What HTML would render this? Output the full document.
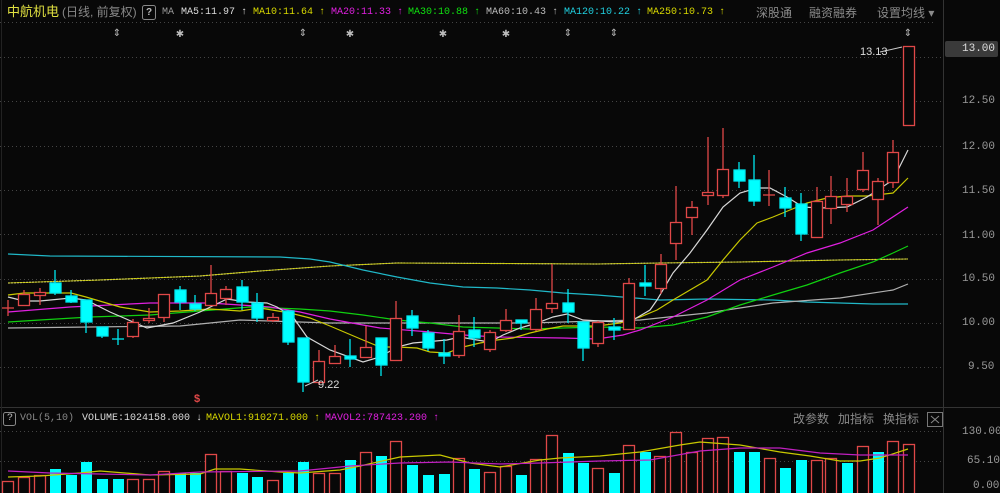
<!DOCTYPE html>
<html><head><meta charset="utf-8"><style>
body{margin:0;background:#080808;width:1000px;height:493px;overflow:hidden;position:relative;font-family:"Liberation Mono","Noto Sans CJK SC",monospace;}
.t{position:absolute;font-size:10px;white-space:nowrap;line-height:12px}
.c{position:absolute;font-family:"Liberation Sans","Noto Sans CJK SC",sans-serif;font-size:12px;white-space:nowrap;line-height:14px;color:#8a8a8a}
.ax{position:absolute;left:962px;font-size:11px;color:#9a9a9a;line-height:12px}
</style></head><body>
<svg width="1000" height="493" style="position:absolute;left:0;top:0">
<g stroke="#444" stroke-dasharray="1,3" stroke-width="1">
<line x1="0" y1="22.5" x2="935" y2="22.5"/>
<line x1="0" y1="57.5" x2="943" y2="57.5"/><line x1="0" y1="101.5" x2="943" y2="101.5"/>
<line x1="0" y1="146.5" x2="943" y2="146.5"/><line x1="0" y1="190.5" x2="943" y2="190.5"/>
<line x1="0" y1="234.5" x2="943" y2="234.5"/><line x1="0" y1="279.5" x2="943" y2="279.5"/>
<line x1="0" y1="323.5" x2="943" y2="323.5"/><line x1="0" y1="367.5" x2="943" y2="367.5"/>
<line x1="0" y1="431.5" x2="943" y2="431.5"/><line x1="0" y1="461.5" x2="943" y2="461.5"/>
</g>
<line x1="0" y1="407.5" x2="1000" y2="407.5" stroke="#333"/>
<line x1="943.5" y1="0" x2="943.5" y2="493" stroke="#333"/>
<line x1="1.5" y1="0" x2="1.5" y2="493" stroke="#222"/>
<g fill="none" stroke-width="1.2">
<polyline stroke="#c8c8c8" stroke-dasharray="2,1" points="8,283 100,280 200,276 260,271 330,266 397,263 597,264 660,263 740,262 840,260 908,259" />
<polyline stroke="#d0d000" stroke-width="0.8" points="8,283 100,280 200,276 260,271 330,266 397,263 597,264 660,263 740,262 840,260 908,259" />
<polyline stroke="#20b8c8" points="8,254 50,256 280,257 310,259 330,262 363,270 397,277 430,283 463,287 497,288 530,290 563,293 597,295 660,300 707,299 773,300 807,302 840,303 873,304 908,304"/>
<polyline stroke="#b0b0b0" points="8,328 90,327 180,326 240,320 330,323 397,323 530,323 597,321 640,320 707,313 773,303 840,298 893,290 908,284"/>
<polyline stroke="#10d010" points="8,322 40,320 90,317 150,315 200,311 250,307 300,309 330,311 363,315 397,320 430,323 463,327 497,328 530,329 563,328 597,327 640,328 673,325 707,317 740,305 773,295 807,285 840,273 873,262 893,253 908,246"/>
<polyline stroke="#e020e0" points="8,312 70,307 150,303 210,303 240,305 270,307 300,312 330,319 363,325 380,328 430,332 463,335 497,337 563,338 597,339 623,335 640,330 673,317 707,300 740,280 773,267 807,253 840,243 873,230 908,207"/>
<polyline stroke="#c8c800" points="8,295 24,293 71,293 86,297 120,307 150,312 180,311 210,309 240,311 260,308 290,313 310,318 330,326 363,340 380,347 397,347 417,348 430,352 447,353 463,347 480,343 497,340 513,338 530,333 547,329 563,326 597,326 620,323 640,317 657,310 673,300 690,290 707,280 723,260 740,240 757,223 773,217 790,210 807,203 827,198 847,196 867,196 893,193 908,178"/>
<polyline stroke="#d8d8d8" points="8,297 24,301 40,301 71,298 86,300 110,312 147,328 173,323 200,312 227,299 247,302 267,303 277,307 293,317 307,337 330,350 363,362 380,357 397,347 413,343 447,340 460,337 477,340 490,342 503,335 520,328 537,323 553,317 567,314 583,320 617,322 633,320 650,310 657,300 673,273 690,253 707,230 723,207 740,193 757,188 770,188 787,197 803,207 820,208 847,207 867,197 893,180 908,150"/>
</g>
<g stroke-width="1.3">
<g stroke="#e04848" fill="#080808">
<line x1="8" y1="300" x2="8" y2="316"/><line x1="2" y1="308" x2="14" y2="308"/>
<line x1="24" y1="290" x2="24" y2="305"/><rect x="18.5" y="294.5" width="11" height="11"/>
<line x1="40" y1="288" x2="40" y2="305"/><rect x="34.5" y="292.5" width="11" height="3"/>
<line x1="133" y1="319" x2="133" y2="338"/><rect x="127.5" y="322.5" width="11" height="14"/>
<line x1="149" y1="308" x2="149" y2="323"/><rect x="143.5" y="318.5" width="11" height="2"/>
<line x1="164" y1="294" x2="164" y2="322"/><rect x="158.5" y="294.5" width="11" height="23"/>
<line x1="211" y1="265" x2="211" y2="305"/><rect x="205.5" y="293.5" width="11" height="12"/>
<line x1="226" y1="286" x2="226" y2="305"/><rect x="220.5" y="289.5" width="11" height="9"/>
<line x1="273" y1="313" x2="273" y2="322"/><rect x="267.5" y="317.5" width="11" height="3"/>
<line x1="319" y1="350" x2="319" y2="385"/><rect x="313.5" y="361.5" width="11" height="21"/>
<line x1="335" y1="345" x2="335" y2="363"/><rect x="329.5" y="356.5" width="11" height="7"/>
<line x1="366" y1="326" x2="366" y2="358"/><rect x="360.5" y="347.5" width="11" height="10"/>
<line x1="396" y1="301" x2="396" y2="361"/><rect x="390.5" y="318.5" width="11" height="42"/>
<line x1="459" y1="315" x2="459" y2="358"/><rect x="453.5" y="331.5" width="11" height="24"/>
<line x1="490" y1="330" x2="490" y2="352"/><rect x="484.5" y="332.5" width="11" height="17"/>
<line x1="506" y1="309" x2="506" y2="332"/><rect x="500.5" y="320.5" width="11" height="10"/>
<line x1="536" y1="298" x2="536" y2="331"/><rect x="530.5" y="309.5" width="11" height="20"/>
<line x1="552" y1="264" x2="552" y2="313"/><rect x="546.5" y="303.5" width="11" height="5"/>
<line x1="598" y1="321" x2="598" y2="347"/><rect x="592.5" y="322.5" width="11" height="21"/>
<line x1="629" y1="278" x2="629" y2="330"/><rect x="623.5" y="283.5" width="11" height="46"/>
<line x1="661" y1="254" x2="661" y2="294"/><rect x="655.5" y="264.5" width="11" height="24"/>
<line x1="676" y1="186" x2="676" y2="260"/><rect x="670.5" y="222.5" width="11" height="21"/>
<line x1="692" y1="201" x2="692" y2="235"/><rect x="686.5" y="207.5" width="11" height="10"/>
<line x1="708" y1="137" x2="708" y2="205"/><rect x="702.5" y="192.5" width="11" height="3"/>
<line x1="723" y1="128" x2="723" y2="198"/><rect x="717.5" y="169.5" width="11" height="26"/>
<line x1="769" y1="170" x2="769" y2="206"/><line x1="763" y1="195" x2="775" y2="195"/>
<line x1="817" y1="187" x2="817" y2="238"/><rect x="811.5" y="201.5" width="11" height="36"/>
<line x1="831" y1="176" x2="831" y2="224"/><rect x="825.5" y="196.5" width="11" height="12"/>
<line x1="847" y1="178" x2="847" y2="212"/><rect x="841.5" y="196.5" width="11" height="8"/>
<line x1="863" y1="152" x2="863" y2="192"/><rect x="857.5" y="170.5" width="11" height="19"/>
<line x1="878" y1="178" x2="878" y2="225"/><rect x="872.5" y="181.5" width="11" height="18"/>
<line x1="893" y1="140" x2="893" y2="188"/><rect x="887.5" y="152.5" width="11" height="30"/>
<rect x="903.5" y="46.5" width="11" height="79"/>
</g>
<g stroke="#00e8f0" fill="#00ffff">
<line x1="55" y1="270" x2="55" y2="295"/><rect x="50" y="283" width="11" height="10"/>
<line x1="71" y1="290" x2="71" y2="303"/><rect x="66" y="296" width="11" height="6"/>
<line x1="86" y1="300" x2="86" y2="333"/><rect x="81" y="300" width="11" height="22"/>
<line x1="102" y1="327" x2="102" y2="338"/><rect x="97" y="327" width="11" height="9"/>
<line x1="118" y1="329" x2="118" y2="345"/><line x1="112" y1="339" x2="124" y2="339"/>
<line x1="180" y1="286" x2="180" y2="310"/><rect x="175" y="290" width="11" height="12"/>
<line x1="195" y1="295" x2="195" y2="311"/><rect x="190" y="304" width="11" height="5"/>
<line x1="242" y1="280" x2="242" y2="310"/><rect x="237" y="287" width="11" height="15"/>
<line x1="257" y1="293" x2="257" y2="322"/><rect x="252" y="303" width="11" height="15"/>
<line x1="288" y1="310" x2="288" y2="345"/><rect x="283" y="311" width="11" height="31"/>
<line x1="303" y1="338" x2="303" y2="392"/><rect x="298" y="338" width="11" height="44"/>
<line x1="350" y1="339" x2="350" y2="367"/><rect x="345" y="356" width="11" height="3"/>
<line x1="381" y1="338" x2="381" y2="376"/><rect x="376" y="338" width="11" height="27"/>
<line x1="412" y1="310" x2="412" y2="336"/><rect x="407" y="316" width="11" height="12"/>
<line x1="428" y1="330" x2="428" y2="351"/><rect x="423" y="333" width="11" height="15"/>
<line x1="444" y1="339" x2="444" y2="364"/><rect x="439" y="353" width="11" height="3"/>
<line x1="474" y1="317" x2="474" y2="347"/><rect x="469" y="330" width="11" height="8"/>
<line x1="521" y1="320" x2="521" y2="330"/><rect x="516" y="320" width="11" height="3"/>
<line x1="568" y1="289" x2="568" y2="323"/><rect x="563" y="303" width="11" height="9"/>
<line x1="583" y1="322" x2="583" y2="361"/><rect x="578" y="322" width="11" height="26"/>
<line x1="614" y1="318" x2="614" y2="340"/><rect x="609" y="327" width="11" height="3"/>
<line x1="645" y1="265" x2="645" y2="296"/><rect x="640" y="283" width="11" height="3"/>
<line x1="739" y1="162" x2="739" y2="188"/><rect x="734" y="170" width="11" height="11"/>
<line x1="754" y1="155" x2="754" y2="206"/><rect x="749" y="180" width="11" height="21"/>
<line x1="785" y1="187" x2="785" y2="217"/><rect x="780" y="198" width="11" height="10"/>
<line x1="801" y1="193" x2="801" y2="241"/><rect x="796" y="204" width="11" height="30"/>
</g>
</g>
<line x1="880" y1="52" x2="902" y2="47" stroke="#ccc"/>
<line x1="305" y1="386" x2="318" y2="380" stroke="#ccc"/>
<g stroke-width="1.3">
<g stroke="#e04848" fill="#080808">
<rect x="2.5" y="481.5" width="11" height="14"/><rect x="18.5" y="477.5" width="11" height="18"/><rect x="34.5" y="475.5" width="11" height="20"/>
<rect x="127.5" y="479.5" width="11" height="16"/><rect x="143.5" y="479.5" width="11" height="16"/><rect x="158.5" y="471.5" width="11" height="24"/>
<rect x="205.5" y="454.5" width="11" height="41"/><rect x="220.5" y="471.5" width="11" height="24"/><rect x="267.5" y="480.5" width="11" height="15"/>
<rect x="313.5" y="473.5" width="11" height="22"/><rect x="329.5" y="473.5" width="11" height="22"/><rect x="360.5" y="452.5" width="11" height="43"/>
<rect x="390.5" y="441.5" width="11" height="54"/><rect x="453.5" y="458.5" width="11" height="37"/><rect x="484.5" y="472.5" width="11" height="23"/>
<rect x="500.5" y="466.5" width="11" height="29"/><rect x="530.5" y="459.5" width="11" height="36"/><rect x="546.5" y="435.5" width="11" height="60"/>
<rect x="592.5" y="468.5" width="11" height="27"/><rect x="623.5" y="445.5" width="11" height="50"/><rect x="654.5" y="456.5" width="11" height="39"/>
<rect x="670.5" y="432.5" width="11" height="63"/><rect x="686.5" y="452.5" width="11" height="43"/><rect x="702.5" y="438.5" width="11" height="57"/>
<rect x="717.5" y="437.5" width="11" height="58"/><rect x="764.5" y="458.5" width="11" height="37"/><rect x="811.5" y="460.5" width="11" height="35"/>
<rect x="825.5" y="458.5" width="11" height="37"/><rect x="857.5" y="446.5" width="11" height="49"/><rect x="887.5" y="441.5" width="11" height="54"/>
<rect x="903.5" y="444.5" width="11" height="51"/>
</g>
<g fill="#00ffff" stroke="none">
<rect x="50" y="469" width="11" height="24"/><rect x="66" y="475" width="11" height="18"/><rect x="81" y="462" width="11" height="31"/>
<rect x="97" y="479" width="11" height="14"/><rect x="113" y="479" width="11" height="14"/><rect x="175" y="473" width="11" height="20"/>
<rect x="190" y="473" width="11" height="20"/><rect x="237" y="473" width="11" height="20"/><rect x="252" y="477" width="11" height="16"/>
<rect x="283" y="473" width="11" height="20"/><rect x="298" y="462" width="11" height="31"/><rect x="345" y="460" width="11" height="33"/>
<rect x="376" y="456" width="11" height="37"/><rect x="407" y="465" width="11" height="28"/><rect x="423" y="475" width="11" height="18"/>
<rect x="439" y="474" width="11" height="19"/><rect x="469" y="469" width="11" height="24"/><rect x="516" y="475" width="11" height="18"/>
<rect x="563" y="453" width="11" height="40"/><rect x="578" y="463" width="11" height="30"/><rect x="609" y="473" width="11" height="20"/>
<rect x="640" y="452" width="11" height="41"/><rect x="734" y="452" width="11" height="41"/><rect x="749" y="452" width="11" height="41"/>
<rect x="780" y="468" width="11" height="25"/><rect x="796" y="460" width="11" height="33"/><rect x="842" y="463" width="11" height="30"/>
<rect x="873" y="452" width="11" height="41"/>
</g>
</g>
<g fill="none" stroke-width="1.2">
<polyline stroke="#c8c800" points="8,477 40,476 80,473 100,471 150,475 200,474 215,469 240,469 280,472 300,473 340,470 360,466 400,457 440,455 470,463 500,467 540,460 560,458 600,456 640,452 680,445 700,442 740,445 780,452 810,456 840,461 860,461 880,458 908,449"/>
<polyline stroke="#c020c0" points="8,471 50,473 100,474 150,475 200,472 300,471 350,466 400,463 450,462 500,464 540,463 600,461 650,460 700,451 740,448 780,448 820,453 860,455 908,455"/>
</g>
<g fill="#bbb" font-size="10" font-family="DejaVu Sans" text-anchor="middle">
<text x="117" y="36">⇕</text><text x="180" y="37">✱</text><text x="303" y="36">⇕</text><text x="350" y="37">✱</text>
<text x="443" y="37">✱</text><text x="506" y="37">✱</text><text x="568" y="36">⇕</text><text x="614" y="36">⇕</text><text x="908" y="36">⇕</text>
</g>
<text x="197" y="402" fill="#e04848" font-size="11" font-family="Liberation Sans" font-weight="bold" text-anchor="middle">$</text>
<rect x="945" y="41" width="53" height="16" rx="2" fill="#3a3a3a"/>
<rect x="3.5" y="412.5" width="12" height="13" rx="2" fill="none" stroke="#888"/>
<rect x="927.5" y="412.5" width="15" height="14" fill="none" stroke="#777"/>
<line x1="931" y1="416" x2="939" y2="423" stroke="#888"/><line x1="939" y1="416" x2="931" y2="423" stroke="#888"/>
<rect x="142.5" y="5.5" width="13" height="14" rx="2" fill="none" stroke="#888"/>
</svg>
<div class="c" style="left:7px;top:5px;color:#e0e040;font-size:13px">中航机电</div>
<div class="c" style="left:62px;top:5px;color:#888">(日线, 前复权)</div>
<div class="t" style="left:146px;top:7px;color:#bbb;font-family:'Liberation Sans';font-weight:bold;font-size:10px">?</div>
<div class="t" style="left:162px;top:7px;color:#999">MA</div>
<div class="t" style="left:181px;top:7px;color:#ddd">MA5:11.97 ↑</div>
<div class="t" style="left:253px;top:7px;color:#d8d800">MA10:11.64 ↑</div>
<div class="t" style="left:331px;top:7px;color:#e020e0">MA20:11.33 ↑</div>
<div class="t" style="left:408px;top:7px;color:#10e010">MA30:10.88 ↑</div>
<div class="t" style="left:486px;top:7px;color:#bbb">MA60:10.43 ↑</div>
<div class="t" style="left:564px;top:7px;color:#20d0e0">MA120:10.22 ↑</div>
<div class="t" style="left:647px;top:7px;color:#d8d800">MA250:10.73 ↑</div>
<div class="c" style="left:756px;top:6px">深股通</div>
<div class="c" style="left:809px;top:6px">融资融券</div>
<div class="c" style="left:877px;top:6px">设置均线 ▾</div>
<div class="t" style="left:860px;top:46px;color:#ddd;font-family:'Liberation Sans';font-size:11px">13.13</div>
<div class="t" style="left:318px;top:379px;color:#ddd;font-family:'Liberation Sans';font-size:11px">9.22</div>
<div class="ax" style="top:43px;color:#ddd">13.00</div>
<div class="ax" style="top:95px">12.50</div>
<div class="ax" style="top:141px">12.00</div>
<div class="ax" style="top:185px">11.50</div>
<div class="ax" style="top:230px">11.00</div>
<div class="ax" style="top:273px">10.50</div>
<div class="ax" style="top:317px">10.00</div>
<div class="ax" style="top:361px;left:968px">9.50</div>
<div class="ax" style="top:426px">130.00</div>
<div class="ax" style="top:455px;left:967px">65.10</div>
<div class="ax" style="top:480px;left:973px">0.00</div>
<div class="t" style="left:7px;top:413px;color:#bbb;font-size:10px">?</div>
<div class="t" style="left:20px;top:413px;color:#888">VOL(5,10)</div>
<div class="t" style="left:82px;top:413px;color:#ddd">VOLUME:1024158.000 ↓</div>
<div class="t" style="left:206px;top:413px;color:#d8d800">MAVOL1:910271.000 ↑</div>
<div class="t" style="left:325px;top:413px;color:#e020e0">MAVOL2:787423.200 ↑</div>
<div class="c" style="left:793px;top:412px">改参数</div>
<div class="c" style="left:838px;top:412px">加指标</div>
<div class="c" style="left:883px;top:412px">换指标</div>
</body></html>
